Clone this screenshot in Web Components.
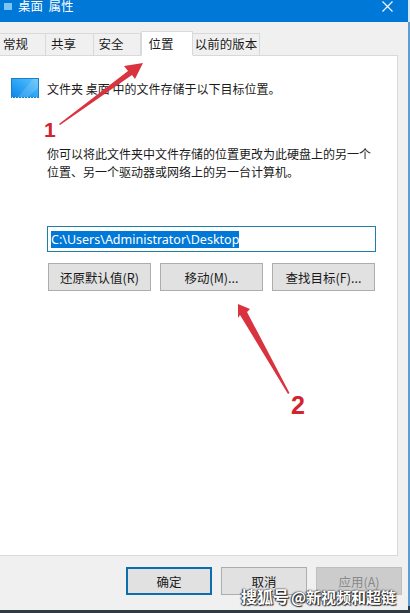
<!DOCTYPE html>
<html lang="zh">
<head>
<meta charset="utf-8">
<title>桌面 属性</title>
<style>
  html, body { margin: 0; height: 100%; overflow: hidden; }
  body {
    background: linear-gradient(#d5e6f4 0 22px, #5f9dd0 22px 606px, #2f3a44 606px);
    font-family: "Noto Sans CJK SC", "Liberation Sans", sans-serif;
    font-size: 12px;
    color: #1a1a1a;
  }
</style>
</head>
<body>
<prop-window title="桌面 属性">
  <prop-tabs>
    <prop-tab style="width:46px;padding-right:14px">常规</prop-tab>
    <prop-tab style="width:48px">共享</prop-tab>
    <prop-tab style="width:47px">安全</prop-tab>
    <prop-tab selected style="width:52px">位置</prop-tab>
    <prop-tab style="width:67px;padding-right:0">以前的版本</prop-tab>
  </prop-tabs>
  <location-page path="C:\Users\Administrator\Desktop"></location-page>
  <dialog-footer></dialog-footer>
</prop-window>
<red-arrows></red-arrows>
<water-mark></water-mark>

<script>
class PropWindow extends HTMLElement{

    constructor(){
        super();
        this.attachShadow({mode: 'open'});
    }

    connectedCallback(){
        this.shadowRoot.innerHTML = `
      <style>
        :host {
          display: flex;
          flex-direction: column;
          width: 408px;
          height: 610px;
          background: #f0f0f0;
        }
        .bar {
          flex: none;
          height: 22px;
          background: #0078d7;
          display: flex;
          align-items: flex-start;
          justify-content: space-between;
          color: #fff;
          font-family: "Liberation Sans", "Noto Sans CJK SC", sans-serif;
          font-size: 12.5px;
          line-height: 15px;
        }
        .left { display: flex; align-items: flex-start; gap: 6px; }
        .mini { width: 8px; height: 7px; margin: 3px 0 0 4px; background: #7cc4f4; }
        .caption { word-spacing: 2px; }
        .close { width: 11px; height: 11px; margin: 1px 15px 0 0; }
      </style>
      <div class="bar">
        <div class="left"><div class="mini"></div><span class="caption">${this.getAttribute('title')}</span></div>
        <svg class="close" viewBox="0 0 11 11"><path d="M0.5 0.5L10.5 10.5M10.5 0.5L0.5 10.5" stroke="#fff" stroke-width="1.1" fill="none"/></svg>
      </div>
      <slot></slot>
    `;
    }
}

class PropTabs extends HTMLElement{

    constructor(){
        super();
        this.attachShadow({mode: 'open'});
    }

    connectedCallback(){
        this.shadowRoot.innerHTML = `
      <style>
        :host {
          display: flex;
          flex: none;
          align-items: flex-end;
          height: 34px;
          margin-bottom: -1px;
          position: relative;
          z-index: 1;
        }
      </style>
      <slot></slot>
    `;
    }
}

class PropTab extends HTMLElement{

    constructor(){
        super();
        this.attachShadow({mode: 'open'});
    }

    connectedCallback(){
        this.shadowRoot.innerHTML = `
      <style>
        :host {
          display: flex;
          align-items: center;
          justify-content: center;
          box-sizing: border-box;
          height: 23px;
          padding: 0 12px 2px 0;
          border: 1px solid #d9d9d9;
          border-left: none;
          background: #f0f0f0;
          font-size: 12.5px;
        }
        :host([selected]) {
          height: 25px;
          padding: 0 12px 0 0;
          background: #fff;
          border-bottom-color: #fff;
          border-left: 1px solid #d9d9d9;
        }
      </style>
      <slot></slot>
    `;
    }
}

class LocationPage extends HTMLElement{

    constructor(){
        super();
        this.attachShadow({mode: 'open'});
    }

    connectedCallback(){
        this.shadowRoot.innerHTML = `
      <style>
        :host {
          display: flex;
          flex-direction: column;
          flex: 1;
          width: 398px;
          box-sizing: border-box;
          padding: 22px 22px 0 11px;
          background: #fff;
          border: 1px solid #d9d9d9;
          border-left: none;
        }
        .info { display: flex; align-items: center; gap: 8px; height: 20px; }
        .folder {
          flex: none;
          width: 28px;
          height: 20px;
        }
        .desc {
          margin: 47px 0 0 36px;
          line-height: 17.5px;
          white-space: nowrap;
        }
        .path {
          box-sizing: border-box;
          height: 26px;
          margin: 46px 0 0 36px;
          width: 329px;
          border: 1px solid #1f7fa8;
          padding: 3px;
          display: flex;
          align-items: center;
        }
        .path span {
          background: #0078d7;
          color: #fff;
          font-family: "Noto Sans", "Liberation Sans", sans-serif;
          font-size: 12.5px;
          line-height: 17px;
        }
        .actions {
          display: grid;
          grid-template-columns: repeat(3, 103px);
          column-gap: 9px;
          margin: 11px 0 0 37px;
        }
      </style>
      <div class="info">
        <svg class="folder" viewBox="0 0 28 20">
          <defs>
            <linearGradient id="sky" x1="0" y1="1" x2="1" y2="0">
              <stop offset="0" stop-color="#0a86e8"/>
              <stop offset="0.5" stop-color="#2fa6f5"/>
              <stop offset="1" stop-color="#5fc4fb"/>
            </linearGradient>
          </defs>
          <rect x="0.5" y="0.5" width="27" height="19" fill="url(#sky)" stroke="#1c7fc4"/>
          <path d="M7 19L22 1H27V10L17 19Z" fill="#fff" opacity="0.14"/>
          <path d="M1 19.5H27" stroke="#cfe8f9" stroke-dasharray="1 2"/>
        </svg>
        <span>文件夹 桌面 中的文件存储于以下目标位置。</span>
      </div>
      <div class="desc">你可以将此文件夹中文件存储的位置更改为此硬盘上的另一个<br>位置、另一个驱动器或网络上的另一台计算机。</div>
      <div class="path"><span>${this.getAttribute('path')}</span></div>
      <div class="actions">
        <win-button>还原默认值(R)</win-button>
        <win-button>移动(M)...</win-button>
        <win-button>查找目标(F)...</win-button>
      </div>
    `;
    }
}

class WinButton extends HTMLElement{

    constructor(){
        super();
        this.attachShadow({mode: 'open'});
    }

    connectedCallback(){
        this.shadowRoot.innerHTML = `
      <style>
        :host {
          display: flex;
          align-items: center;
          justify-content: center;
          box-sizing: border-box;
          height: 28px;
          background: #e1e1e1;
          border: 1px solid #adadad;
          font-size: 12.5px;
        }
        :host([primary]) {
          background: #e1e1e1;
          border: 2px solid #0f6cad;
        }
        :host([disabled]) {
          background: #cccccc;
          border-color: #bfbfbf;
          color: #8a8a8a;
        }
      </style>
      <slot></slot>
    `;
    }
}

class DialogFooter extends HTMLElement{

    constructor(){
        super();
        this.attachShadow({mode: 'open'});
    }

    connectedCallback(){
        this.shadowRoot.innerHTML = `
      <style>
        :host {
          display: grid;
          flex: none;
          box-sizing: border-box;
          height: 54px;
          padding: 11px 0 0 126px;
          grid-template-columns: 86px 86px 86px;
          column-gap: 9px;
          align-content: start;
        }
      </style>
      <win-button primary>确定</win-button>
      <win-button>取消</win-button>
      <win-button disabled>应用(A)</win-button>
    `;
    }
}

// arrows and numbers painted over the dialog
class RedArrows extends HTMLElement{

    constructor(){
        super();
        this.attachShadow({mode: 'open'});
    }

    connectedCallback(){
        this.shadowRoot.innerHTML = `
      <style>
        :host {
          position: absolute;
          left: 0;
          top: 0;
          width: 410px;
          height: 613px;
          pointer-events: none;
        }
        svg { position: absolute; left: 0; top: 0; }
        .num {
          position: absolute;
          color: #d2232e;
          font-family: "Liberation Sans", sans-serif;
          font-weight: bold;
          line-height: 1;
        }
      </style>
      <svg width="410" height="613" viewBox="0 0 410 613">
        <path d="M59 124L128 71L124 66L143 63L135 79L132 75L60 125Z" fill="#d9333f"/>
        <path d="M288 394L240 315L238 318L238 304L250 309L247 312L289.5 393Z" fill="#d9333f"/>
      </svg>
      <div class="num" style="left:44px;top:119px;font-size:21px">1</div>
      <div class="num" style="left:291px;top:393px;font-size:25px">2</div>
    `;
    }
}

class WaterMark extends HTMLElement{

    constructor(){
        super();
        this.attachShadow({mode: 'open'});
    }

    connectedCallback(){
        this.shadowRoot.innerHTML = `
      <style>
        :host {
          position: absolute;
          left: 241px;
          top: 586px;
          color: #fff;
          white-space: nowrap;
          font-weight: bold;
          line-height: 20px;
          text-shadow: 0 0 2px #222, 1px 1px 1px #222, -1px 0 1px #444;
        }
        .a { font-size: 16px; }
        .b { font-size: 15px; margin-left: 2px; }
      </style>
      <span class="a">搜狐号</span><span class="b">@新视频和超链</span>
    `;
    }
}

customElements.define('prop-window', PropWindow);
customElements.define('prop-tabs', PropTabs);
customElements.define('prop-tab', PropTab);
customElements.define('location-page', LocationPage);
customElements.define('win-button', WinButton);
customElements.define('dialog-footer', DialogFooter);
customElements.define('red-arrows', RedArrows);
customElements.define('water-mark', WaterMark);
</script>
</body>
</html>
